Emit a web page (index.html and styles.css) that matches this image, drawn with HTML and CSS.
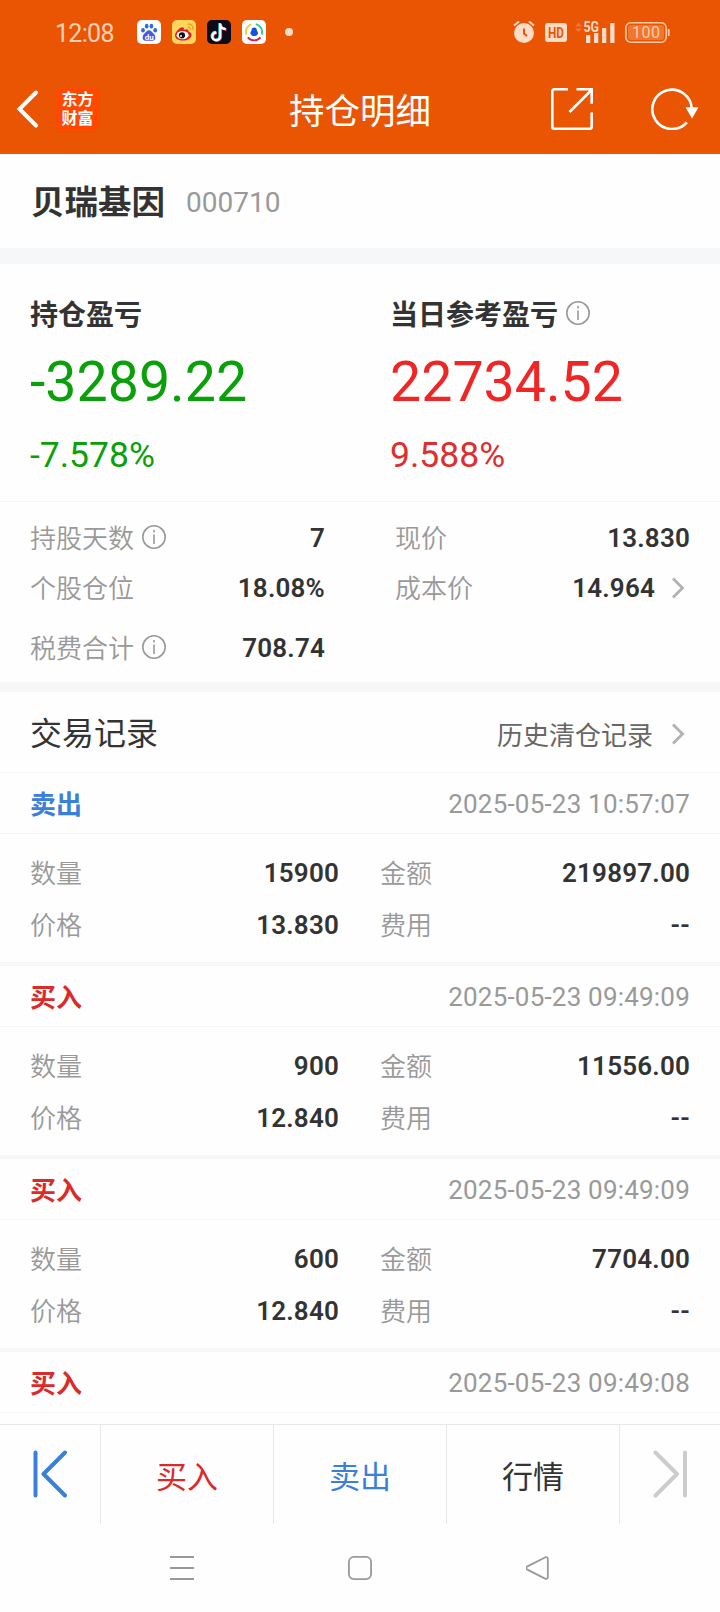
FILE: index.html
```html
<!DOCTYPE html>
<html lang="zh-CN">

<head>
    <meta charset="UTF-8">
    <meta name="viewport" content="width=device-width, initial-scale=1.0">
    <title>持仓明细</title>
    <link rel="stylesheet" href="styles.css">
</head>

<body>
    <div class="screen">
        <header class="header">
            <div class="status-bar">
                <span class="time">12:08</span>
                <div class="apps">
                    <svg width="24" height="24" viewBox="0 0 24 24">
                        <rect width="24" height="24" rx="5" fill="#fff" />
                        <g fill="#2b6be0">
                            <ellipse cx="6" cy="10.300" rx="1.900" ry="2.300" />
                            <ellipse cx="9.700" cy="6.200" rx="1.800" ry="2.400" />
                            <ellipse cx="14.400" cy="6.200" rx="1.800" ry="2.400" />
                            <ellipse cx="18.200" cy="10.300" rx="1.900" ry="2.300" />
                        </g>
                        <path d="M12 10.200c2.200 0 3 2 4.600 3.300 2.400 2 2.600 7.300-1.200 7.300H8.600c-3.800 0-3.600-5.300-1.200-7.300C9 12.200 9.800 10.200 12 10.200z" fill="#4a58e0" />
                        <text x="12.200" y="19.500" class="du">du</text>
                    </svg>
                    <svg width="24" height="24" viewBox="0 0 24 24">
                        <rect width="24" height="24" rx="5" fill="#fdd65b" />
                        <path d="M3 15.500c0-3.700 5.200-9 8-8.300 1.200.4.9 1.900.7 2.600 2.200-1 5.300-1 4.800 1.800 1.500.5 3 1.500 3 3.300 0 3.100-4.200 5.600-8.500 5.600S3 18.600 3 15.500z" fill="#e01e1e" />
                        <ellipse cx="10.600" cy="15.200" rx="6" ry="4.100" fill="#fff" />
                        <circle cx="10" cy="15.300" r="3.100" fill="#111" />
                        <circle cx="9" cy="16" r="1" fill="#fff" />
                        <path d="M15.500 4c3.500-.6 6.300 2.200 5.500 6M15.700 7.200c1.700-.2 2.700.9 2.500 2.500" fill="none" stroke="#f0a020" stroke-width="1.500" />
                    </svg>
                    <svg width="24" height="24" viewBox="0 0 24 24">
                        <rect width="24" height="24" rx="5" fill="#0d0b18" />
                        <g fill="none" stroke-width="2.400">
                            <path d="M12.500 3v12.800a3.900 3.900 0 1 1-3.900-3.900M12.500 3.500c.4 3.200 2.500 4.900 5.600 5" stroke="#2ce5e2" />
                            <path d="M13.900 4.200V17a3.900 3.900 0 1 1-3.900-3.900M13.900 4.700c.4 3.200 2.500 4.900 5.600 5" stroke="#f8305a" />
                            <path d="M13.200 3.600v12.800a3.900 3.900 0 1 1-3.900-3.900M13.200 4.100c.4 3.200 2.500 4.900 5.600 5" stroke="#fff" />
                        </g>
                    </svg>
                    <svg width="24" height="24" viewBox="0 0 24 24">
                        <rect width="24" height="24" rx="5" fill="#fff" />
                        <g fill="none" stroke-width="1.900">
                            <path d="M9.500 4.200A8.200 8.200 0 0 0 4.200 14.500" stroke="#f6cf2d" />
                            <path d="M13.800 4.100a8.200 8.200 0 0 1 6 10.500" stroke="#3cc6a0" />
                            <path d="M5.800 17.400a8.200 8.200 0 0 0 12.700 0" stroke="#d81e5c" />
                        </g>
                        <path d="M12.200 7.600c1.800 0 2.700 1.200 2.700 3 1.300 1.500 1.500 3.400.6 3.600-.8 1.500-1.800 1.900-3.300 1.900s-2.500-.4-3.300-1.900c-.9-.2-.7-2.100.6-3.600 0-1.800.9-3 2.700-3z" fill="#1454dc" />
                    </svg>
                </div>
                <span class="dot"></span>
                <div class="signals">
                    <svg width="22" height="24" viewBox="0 0 22 24">
                        <circle cx="11" cy="13" r="10" fill="#ffdcc8" />
                        <path d="M1 5.500 6 1.500M16 1.500l5 4" stroke="#ffdcc8" stroke-width="2" />
                        <path d="M11 8.500v5l3 2.500" fill="none" stroke="#ea5504" stroke-width="2" />
                    </svg>
                    <svg class="hd" width="22" height="19" viewBox="0 0 22 19">
                        <rect width="22" height="19" rx="3" fill="#ffdcc8" />
                        <text x="11" y="14.800" textLength="16" lengthAdjust="spacingAndGlyphs">HD</text>
                    </svg>
                    <svg class="cell" width="41" height="24" viewBox="0 0 41 24">
                        <path d="M0 6.500 3.500 2.500 7 6.500zM0 8.500 3.500 12 7 8.500z" fill="#f2763b" />
                        <path d="M11 15h4.300v8H11zM19 13h4.300v10H19zM27 8h4.300v15H27zM35.200 3h4.300v20h-4.300z" fill="#ffdcc8" />
                        <text x="8.500" y="11.500" textLength="15.500" lengthAdjust="spacingAndGlyphs">5G</text>
                    </svg>
                    <svg class="battery" width="45" height="21" viewBox="0 0 45 21">
                        <rect x=".8" y=".8" width="40.400" height="19.400" rx="5" fill="none" stroke="#ffc9a6" stroke-width="1.600" />
                        <rect x="3" y="3" width="36" height="15" rx="3" fill="#f0772f" />
                        <path d="M43.700 7v7" stroke="#ffc9a6" stroke-width="1.800" />
                        <text x="21" y="16" textLength="28">100</text>
                    </svg>
                </div>
            </div>
            <div class="title-bar">
                <div class="title-left">
                    <svg width="24" height="40" viewBox="0 0 24 40">
                        <path d="M21 3.500 4.500 20 21 36.500" fill="none" stroke="#fff" stroke-width="4" stroke-linecap="round" />
                    </svg>
                    <div class="logo">东方<br>财富</div>
                </div>
                <h1 class="title">持仓明细</h1>
                <div class="title-right">
                    <svg width="42" height="42" viewBox="0 0 42 42">
                        <path d="M17 1.300H3.300a2 2 0 0 0-2 2v35.400a2 2 0 0 0 2 2h35.400a2 2 0 0 0 2-2V24.500M25.500 1.300h15.200v14.500M18.500 24 40.500 2" fill="none" stroke="#fff" stroke-width="2.600" />
                    </svg>
                    <svg width="48" height="42" viewBox="0 0 48 42">
                        <path d="M35.800 34.400A19.700 19.700 0 1 1 40.700 21" fill="none" stroke="#fff" stroke-width="2.600" />
                        <path d="M34.500 19.300h13L41 30.500z" fill="#fff" />
                    </svg>
                </div>
            </div>
        </header>

        <div class="stock">
            <h2 class="stock-name">贝瑞基因</h2>
            <span class="stock-code">000710</span>
        </div>

        <div class="profit">
            <div class="profit-item green">
                <h3>持仓盈亏</h3>
                <p class="amount">-3289.22</p>
                <p class="percent">-7.578%</p>
            </div>
            <div class="profit-item red">
                <h3>当日参考盈亏
                    <svg class="info" width="24" height="24" viewBox="0 0 24 24">
                        <circle cx="12" cy="12" r="11.200" />
                        <path d="M12 9.500V19M12 5v2.500" />
                    </svg>
                </h3>
                <p class="amount">22734.52</p>
                <p class="percent">9.588%</p>
            </div>
        </div>

        <div class="details">
            <div class="row">
                <span class="label">持股天数
                    <svg class="info" width="24" height="24" viewBox="0 0 24 24">
                        <circle cx="12" cy="12" r="11.200" />
                        <path d="M12 9.500V19M12 5v2.500" />
                    </svg>
                </span>
                <span class="value">7</span>
            </div>
            <div class="row">
                <span class="label">现价</span>
                <span class="value">13.830</span>
            </div>
            <div class="row">
                <span class="label">个股仓位</span>
                <span class="value">18.08%</span>
            </div>
            <div class="row">
                <span class="label">成本价</span>
                <span class="value">14.964</span>
                <svg class="arrow" width="14" height="22" viewBox="0 0 14 22">
                    <path d="M2 1.500 11.500 11 2 20.500" />
                </svg>
            </div>
            <div class="row">
                <span class="label">税费合计
                    <svg class="info" width="24" height="24" viewBox="0 0 24 24">
                        <circle cx="12" cy="12" r="11.200" />
                        <path d="M12 9.500V19M12 5v2.500" />
                    </svg>
                </span>
                <span class="value">708.74</span>
            </div>
        </div>

        <div class="records-head">
            <h2>交易记录</h2>
            <a class="history">历史清仓记录
                <svg class="arrow" width="14" height="22" viewBox="0 0 14 22">
                    <path d="M2 1.500 11.500 11 2 20.500" />
                </svg>
            </a>
        </div>

        <div class="records">
            <div class="record">
                <div class="record-head">
                    <span class="type sell">卖出</span>
                    <span class="date">2025-05-23 10:57:07</span>
                </div>
                <div class="record-body">
                    <span class="label">数量</span><span class="value">15900</span>
                    <span class="label">金额</span><span class="value">219897.00</span>
                    <span class="label">价格</span><span class="value">13.830</span>
                    <span class="label">费用</span><span class="value">--</span>
                </div>
            </div>
            <div class="record">
                <div class="record-head">
                    <span class="type buy">买入</span>
                    <span class="date">2025-05-23 09:49:09</span>
                </div>
                <div class="record-body">
                    <span class="label">数量</span><span class="value">900</span>
                    <span class="label">金额</span><span class="value">11556.00</span>
                    <span class="label">价格</span><span class="value">12.840</span>
                    <span class="label">费用</span><span class="value">--</span>
                </div>
            </div>
            <div class="record">
                <div class="record-head">
                    <span class="type buy">买入</span>
                    <span class="date">2025-05-23 09:49:09</span>
                </div>
                <div class="record-body">
                    <span class="label">数量</span><span class="value">600</span>
                    <span class="label">金额</span><span class="value">7704.00</span>
                    <span class="label">价格</span><span class="value">12.840</span>
                    <span class="label">费用</span><span class="value">--</span>
                </div>
            </div>
            <div class="record">
                <div class="record-head">
                    <span class="type buy">买入</span>
                    <span class="date">2025-05-23 09:49:08</span>
                </div>
            </div>
        </div>

        <div class="tabs">
            <div class="tab prev">
                <svg width="34" height="48" viewBox="0 0 34 48">
                    <path d="M2.500 2.500v43M32 2.500 10.500 24 32 45.500" />
                </svg>
            </div>
            <div class="tab buy">买入</div>
            <div class="tab sell">卖出</div>
            <div class="tab">行情</div>
            <div class="tab next">
                <svg width="34" height="48" viewBox="0 0 34 48">
                    <path d="M32 2.500v43M2.500 2.500 24 24 2.500 45.500" />
                </svg>
            </div>
        </div>

        <div class="nav">
            <svg width="24" height="24" viewBox="0 0 24 24">
                <path d="M0 1h24M0 12h24M0 23h24" />
            </svg>
            <svg width="24" height="24" viewBox="0 0 24 24">
                <rect x=".9" y=".9" width="22.200" height="22.200" rx="5" />
            </svg>
            <svg width="24" height="24" viewBox="0 0 24 24">
                <path d="M19.500 1.200 1 10.600q-2 1.400 0 2.800l18.500 9.400q2.300.6 2.300-1.800V3q0-2.400-2.300-1.800z" />
            </svg>
        </div>
    </div>
</body>

</html>
```
FILE: styles.css
```css
* {
    box-sizing: border-box;
}

body {
    margin: 0;
    background: #fefefe;
    color: #333;
    font-family: Roboto, "Noto Sans CJK SC", sans-serif;
    font-size: 26px;
}

h1,
h2,
h3,
p {
    margin: 0;
}

svg {
    display: block;
    flex: none;
}

.screen {
    display: flex;
    flex-direction: column;
    width: 720px;
    height: 1612px;
    overflow: hidden;
}

.header {
    height: 154px;
    background: #ea5504;
    color: #fff;
}

.status-bar {
    display: flex;
    align-items: center;
    height: 64px;
    padding: 0 50px 0 55px;
}

.time {
    width: 82px;
    padding-top: 2px;
    font-size: 25px;
    letter-spacing: -0.7px;
    color: #ffd0b4;
}

.apps {
    display: flex;
    gap: 11px;
}

.du {
    font: bold 8px Roboto, sans-serif;
    fill: #fff;
    text-anchor: middle;
}

.dot {
    width: 8px;
    height: 8px;
    margin-left: 19px;
    border-radius: 50%;
    background: #ffdcc8;
}

.signals {
    display: flex;
    align-items: center;
    margin-left: auto;
}

.hd {
    margin: 1px 8px 0 10px;
}

.hd text {
    font: bold 15px Roboto, sans-serif;
    fill: #ea5504;
    text-anchor: middle;
}

.cell text {
    font: bold 14px Roboto, sans-serif;
    fill: #ffdcc8;
    stroke: #ea5504;
    stroke-width: 2px;
    paint-order: stroke;
}

.battery {
    margin: 1px 0 0 9px;
}

.battery text {
    font: 16px Roboto, sans-serif;
    fill: #ffc9a6;
    text-anchor: middle;
}

.title-bar {
    display: grid;
    grid-template-columns: 1fr auto 1fr;
    align-items: center;
    height: 90px;
    padding: 0 21px 0 15px;
}

.title-left {
    display: flex;
    align-items: center;
    gap: 16px;
}

.logo {
    width: 45px;
    height: 45px;
    padding-top: 3px;
    border-radius: 9px;
    background: #ff4800;
    font-size: 16px;
    font-weight: 700;
    line-height: 19px;
    text-align: center;
}

.title {
    padding: 5px 0 0 6px;
    font-size: 35.5px;
    font-weight: 400;
    line-height: 50px;
}

.title-right {
    display: flex;
    justify-content: flex-end;
    gap: 58px;
}

.stock {
    display: flex;
    align-items: center;
    gap: 21px;
    height: 94px;
    padding: 3px 0 0 31px;
}

.stock-name {
    font-size: 33.5px;
    font-weight: 600;
    line-height: 50px;
}

.stock-code {
    font-size: 28px;
    color: #999;
}

.profit {
    display: grid;
    grid-template-columns: 360px 1fr;
    height: 254px;
    padding: 32px 0 0 30px;
    border-top: 16px solid #f6f7f9;
    border-bottom: 1px solid #f5f5f5;
}

.profit h3 {
    display: flex;
    align-items: center;
    gap: 8px;
    font-size: 28px;
    font-weight: 600;
    line-height: 40px;
    color: #333;
}

.profit .info {
    margin-bottom: 6px;
}

.amount {
    margin-top: 12px;
    font-size: 55.5px;
    line-height: 70px;
}

.percent {
    margin-top: 17px;
    font-size: 35.5px;
    line-height: 40px;
}

.green {
    color: #0aa00a;
}

.red .amount {
    color: #ee2626;
}

.red .percent {
    color: #dc2f2f;
}

.info {
    margin-bottom: 3px;
    fill: none;
    stroke: #999;
    stroke-width: 1.6px;
}

.details {
    display: grid;
    grid-template-columns: 295px 295px;
    grid-template-rows: 50px 50px 70px;
    column-gap: 70px;
    height: 190px;
    padding: 11px 30px 0;
    border-bottom: 10px solid #f6f7f9;
}

.row {
    display: flex;
    align-items: center;
    line-height: 40px;
}

.row .value {
    margin-left: auto;
}

.row .arrow {
    margin: 0 5px 0 16px;
}

.label {
    display: flex;
    align-items: center;
    gap: 8px;
    padding-top: 1px;
    color: #999;
    font-weight: 350;
}

.value {
    font-weight: 600;
    letter-spacing: 0.2px;
    text-align: right;
}

.arrow {
    fill: none;
    stroke: #b2b2b2;
    stroke-width: 2.8px;
}

.records-head {
    display: flex;
    align-items: center;
    justify-content: space-between;
    height: 81px;
    padding: 4px 35px 0 30px;
    border-bottom: 1px solid #f5f5f5;
}

.records-head h2 {
    font-size: 32px;
    font-weight: 400;
    line-height: 50px;
}

.history {
    display: flex;
    align-items: center;
    gap: 18px;
    padding-top: 3px;
    color: #666;
    line-height: 40px;
}

.history .arrow {
    margin-bottom: 3px;
}

.records {
    flex: 1;
    overflow: hidden;
}

.record {
    border-bottom: 4px solid #f6f7f9;
}

.record:last-child {
    border-bottom: none;
}

.record-head {
    display: flex;
    align-items: center;
    justify-content: space-between;
    height: 61px;
    padding: 2px 30px 0;
    border-bottom: 1px solid #f5f5f5;
    line-height: 40px;
}

.type {
    padding-top: 2px;
    font-weight: 600;
}

.date {
    letter-spacing: 0.2px;
    color: #999;
}

.record-body {
    display: grid;
    grid-template-columns: 80px 229px 41px 80px 230px;
    grid-template-rows: 52px 52px;
    align-items: center;
    height: 128px;
    padding: 13px 30px 0;
    line-height: 40px;
}

.record-body .label:nth-child(4n + 3) {
    grid-column: 4;
}

.sell {
    color: #3a80d8;
}

.buy {
    color: #dc2a2a;
}

.tabs {
    display: grid;
    grid-template-columns: 101px 173px 173px 173px 100px;
    height: 100px;
    border-top: 1px solid #e8e8e8;
}

.tab {
    display: flex;
    align-items: center;
    justify-content: center;
    padding-top: 6px;
    border-right: 1px solid #e8e8e8;
    font-size: 31px;
    line-height: 48px;
}

.tab svg {
    fill: none;
    stroke-width: 4px;
    stroke-linecap: round;
    stroke-linejoin: round;
}

.prev {
    padding: 0 0 2px;
    stroke: #3a80d8;
}

.next {
    padding: 0 0 2px;
    border-right: none;
    stroke: #ccc;
}

.nav {
    display: flex;
    justify-content: center;
    gap: 154px;
    height: 88px;
    padding-top: 32px;
    fill: none;
    stroke: #999;
    stroke-width: 1.8px;
}
```
